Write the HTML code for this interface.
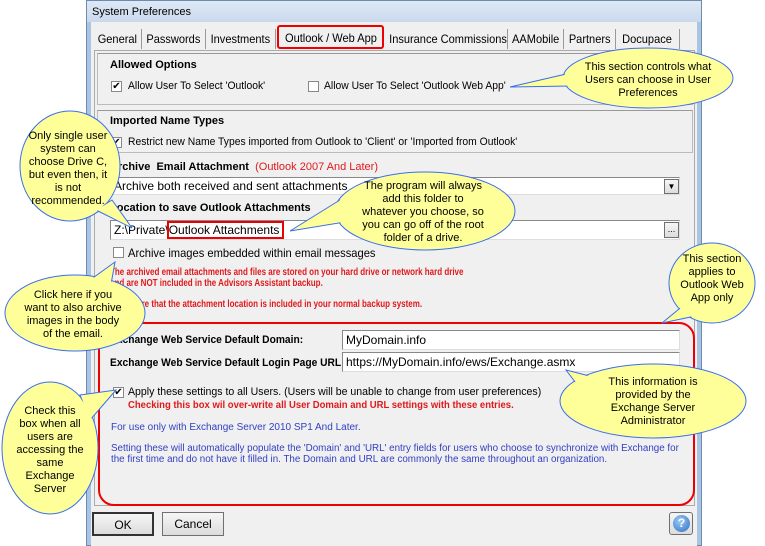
<!DOCTYPE html>
<html><head><style>
*{margin:0;padding:0;box-sizing:border-box}
body{width:765px;height:546px;background:#fff;position:relative;overflow:hidden;font-family:"Liberation Sans",sans-serif;font-size:11px;color:#000}
.a{position:absolute;white-space:nowrap;transform-origin:0 0}
.win{position:absolute;left:86px;top:0;width:616px;height:546px;background:#a9c5e3;border:1px solid #6b8bb0}
.title{position:absolute;left:87px;top:1px;width:614px;height:21px;background:linear-gradient(#dfe9f5,#c9d9ec)}
.inner{position:absolute;left:91px;top:22px;width:606px;height:524px;background:#f0f0f0}
.tab{position:absolute;top:29px;height:20px;font-size:12px;padding-top:3px;text-align:center;border-right:1px solid #999;background:#f0f0f0;white-space:nowrap;overflow:hidden}
.panel{position:absolute;left:94px;top:50px;width:601px;height:456px;border:1px solid #aaa;background:#f0f0f0}
.sec{position:absolute;border:1px solid #bbb;border-top-color:#999}
.b{font-weight:bold}
.red{color:#e0191c;font-weight:bold}
.cb{position:absolute;width:11px;height:11px;border:1px solid #888;background:#fff;font-size:10px;line-height:9px;text-align:center}
.inp{position:absolute;background:#fff;border:1px solid #888;border-right-color:#ddd;border-bottom-color:#ddd;font-size:12px;padding:2px 3px;white-space:nowrap}
.btn{position:absolute;border:1px solid #707070;background:linear-gradient(#f6f6f6,#dcdcdc);font-size:12px;text-align:center;line-height:22px}
.blue{color:#3340c4}
</style></head><body>
<div class="win"></div>
<div class="title"></div>
<div class="a" style="left:92px;top:6px;font-size:11px">System Preferences</div>
<div class="inner"></div>
<div class="panel"></div>
<div class="tab" style="left:94px;width:48px"><span style="display:inline-block;transform:scaleX(.92)">General</span></div>
<div class="tab" style="left:142px;width:64px"><span style="display:inline-block;transform:scaleX(.92)">Passwords</span></div>
<div class="tab" style="left:206px;width:70px"><span style="display:inline-block;transform:scaleX(.92)">Investments</span></div>
<div class="tab" style="left:277px;top:25px;width:107px;height:24px;border:2px solid #e00;border-radius:3px;padding-top:4px"><span style="display:inline-block;transform:scaleX(.92)">Outlook / Web App</span></div>
<div class="tab" style="left:384px;width:124px"><span style="display:inline-block;transform:scaleX(.92)">Insurance Commissions</span></div>
<div class="tab" style="left:508px;width:56px"><span style="display:inline-block;transform:scaleX(.92)">AAMobile</span></div>
<div class="tab" style="left:564px;width:52px"><span style="display:inline-block;transform:scaleX(.92)">Partners</span></div>
<div class="tab" style="left:616px;width:64px"><span style="display:inline-block;transform:scaleX(.92)">Docupace</span></div>

<div class="sec" style="left:97px;top:53px;width:596px;height:52px"></div>
<div class="a b" style="left:110px;top:59px">Allowed Options</div>
<div class="cb" style="left:111px;top:81px">✔</div>
<div class="a" style="left:128px;top:80px;transform:scaleX(.94)">Allow User To Select 'Outlook'</div>
<div class="cb" style="left:308px;top:81px"></div>
<div class="a" style="left:324px;top:80px;transform:scaleX(.94)">Allow User To Select 'Outlook Web App'</div>

<div class="sec" style="left:97px;top:110px;width:596px;height:43px"></div>
<div class="a b" style="left:110px;top:115px">Imported Name Types</div>
<div class="cb" style="left:111px;top:137px">✔</div>
<div class="a" style="left:128px;top:136px;transform:scaleX(.94)">Restrict new Name Types imported from Outlook to 'Client' or 'Imported from Outlook'</div>

<div class="a b" style="left:110px;top:161px">Archive &nbsp;Email Attachment &nbsp;<span class="red" style="font-weight:normal">(Outlook 2007 And Later)</span></div>
<div class="inp" style="left:110px;top:177px;width:570px;height:18px;padding-top:1px">Archive both received and sent attachments</div>
<div class="btn" style="left:664px;top:179px;width:15px;height:15px;line-height:13px;font-size:8px">▼</div>
<div class="a b" style="left:110px;top:202px">Location to save Outlook Attachments</div>
<div class="inp" style="left:110px;top:220px;width:570px;height:20px">Z:\Private\<span style="outline:2px solid #e00;padding:0 3px 0 0">Outlook Attachments</span></div>
<div class="btn" style="left:664px;top:222px;width:15px;height:16px;line-height:12px;font-size:9px">...</div>
<div class="cb" style="left:113px;top:247px"></div>
<div class="a" style="left:128px;top:246px;font-size:12px;transform:scaleX(.93)">Archive images embedded within email messages</div>
<div class="a red" style="left:110px;top:267px;font-size:10px;transform:scaleX(.8)">The archived email attachments and files are stored on your hard drive or network hard drive</div>
<div class="a red" style="left:110px;top:278px;font-size:10px;transform:scaleX(.8)">and are NOT included in the Advisors Assistant backup.</div>
<div class="a red" style="left:110px;top:299px;font-size:10px;transform:scaleX(.8)">Make sure that the attachment location is included in your normal backup system.</div>

<div class="a" style="left:98px;top:322px;width:597px;height:184px;border:2px solid #e00;border-radius:16px"></div>
<div class="a b" style="left:110px;top:334px;transform:scaleX(.93)">Exchange Web Service Default Domain:</div>
<div class="inp" style="left:342px;top:330px;width:338px;height:20px">MyDomain.info</div>
<div class="a b" style="left:110px;top:357px;transform:scaleX(.93)">Exchange Web Service Default Login Page URL:</div>
<div class="inp" style="left:342px;top:352px;width:338px;height:20px">https://MyDomain.info/ews/Exchange.asmx</div>
<div class="cb" style="left:113px;top:387px">✔</div>
<div class="a" style="left:128px;top:386px;transform:scaleX(.96)">Apply these settings to all Users. (Users will be unable to change from user preferences)</div>
<div class="a red" style="left:128px;top:400px;font-size:10px;transform:scaleX(.95)">Checking this box wil over-write all User Domain and URL settings with these entries.</div>
<div class="a blue" style="left:111px;top:422px;font-size:10px">For use only with Exchange Server 2010 SP1 And Later.</div>
<div class="a blue" style="left:111px;top:443px;font-size:9.8px">Setting these will automatically populate the 'Domain' and 'URL' entry fields for users who choose to synchronize with Exchange for</div>
<div class="a blue" style="left:111px;top:454px;font-size:9.8px">the first time and do not have it filled in. The Domain and URL are commonly the same throughout an organization.</div>

<div class="btn" style="left:92px;top:512px;width:62px;height:24px;border:2px solid #333">OK</div>
<div class="btn" style="left:162px;top:512px;width:62px;height:24px">Cancel</div>
<div class="btn" style="left:669px;top:512px;width:24px;height:23px;border-radius:3px"></div>
<div class="a" style="left:673px;top:515px;width:17px;height:17px;border-radius:50%;background:radial-gradient(circle at 40% 35%,#9ccaf6,#2d6fc4);color:#fff;font-weight:bold;font-size:12px;text-align:center;line-height:17px">?</div>

<svg class="a" style="left:0;top:0" width="765" height="546">
<g fill="#ffff99" stroke="#3a6ef0" stroke-width="1">
<ellipse cx="648" cy="78" rx="85" ry="30"/>
<path d="M510 87 L570 86 L575 72 Z"/>
<ellipse cx="70" cy="166" rx="50" ry="55"/>
<path d="M96 210 L132 228 L112 200 Z"/>
<ellipse cx="425" cy="211" rx="90" ry="39"/>
<path d="M290 231 L345 222 L340 200 Z"/>
<ellipse cx="75" cy="313" rx="70" ry="38"/>
<path d="M90 280 L115 262 L110 290 Z"/>
<ellipse cx="712" cy="283" rx="43" ry="40"/>
<path d="M662 323 L690 300 L700 315 Z"/>
<ellipse cx="653" cy="401" rx="93" ry="37"/>
<path d="M566 370 L605 380 L585 395 Z"/>
<ellipse cx="50" cy="448" rx="48" ry="66"/>
<path d="M80 395 L116 390 L90 420 Z"/>
</g>
<g stroke="none" fill="#ffff99">
<ellipse cx="648" cy="78" rx="84" ry="29"/>
<ellipse cx="70" cy="166" rx="49" ry="54"/>
<ellipse cx="425" cy="211" rx="89" ry="38"/>
<ellipse cx="75" cy="313" rx="69" ry="37"/>
<ellipse cx="712" cy="283" rx="42" ry="39"/>
<ellipse cx="653" cy="401" rx="92" ry="36"/>
<ellipse cx="50" cy="448" rx="47" ry="65"/>
</g>
<g font-family="Liberation Sans, sans-serif" font-size="11" text-anchor="middle" fill="#000">
<text x="648" y="70">This section controls what</text><text x="648" y="83">Users can choose in User</text><text x="648" y="96">Preferences</text>
<text x="68" y="139">Only single user</text><text x="68" y="152">system can</text><text x="68" y="165">choose Drive C,</text><text x="68" y="178">but even then, it</text><text x="68" y="191">is not</text><text x="68" y="204">recommended.</text>
<text x="423" y="189">The program will always</text><text x="423" y="202">add this folder to</text><text x="423" y="215">whatever you choose, so</text><text x="423" y="228">you can go off of the root</text><text x="423" y="241">folder of a drive.</text>
<text x="73" y="298">Click here if you</text><text x="73" y="311">want to also archive</text><text x="73" y="324">images in the body</text><text x="73" y="337">of the email.</text>
<text x="712" y="262">This section</text><text x="712" y="275">applies to</text><text x="712" y="288">Outlook Web</text><text x="712" y="301">App only</text>
<text x="653" y="385">This information is</text><text x="653" y="398">provided by the</text><text x="653" y="411">Exchange Server</text><text x="653" y="424">Administrator</text>
<text x="50" y="414">Check this</text><text x="50" y="427">box when all</text><text x="50" y="440">users are</text><text x="50" y="453">accessing the</text><text x="50" y="466">same</text><text x="50" y="479">Exchange</text><text x="50" y="492">Server</text>
</g>
</svg>
</body></html>
